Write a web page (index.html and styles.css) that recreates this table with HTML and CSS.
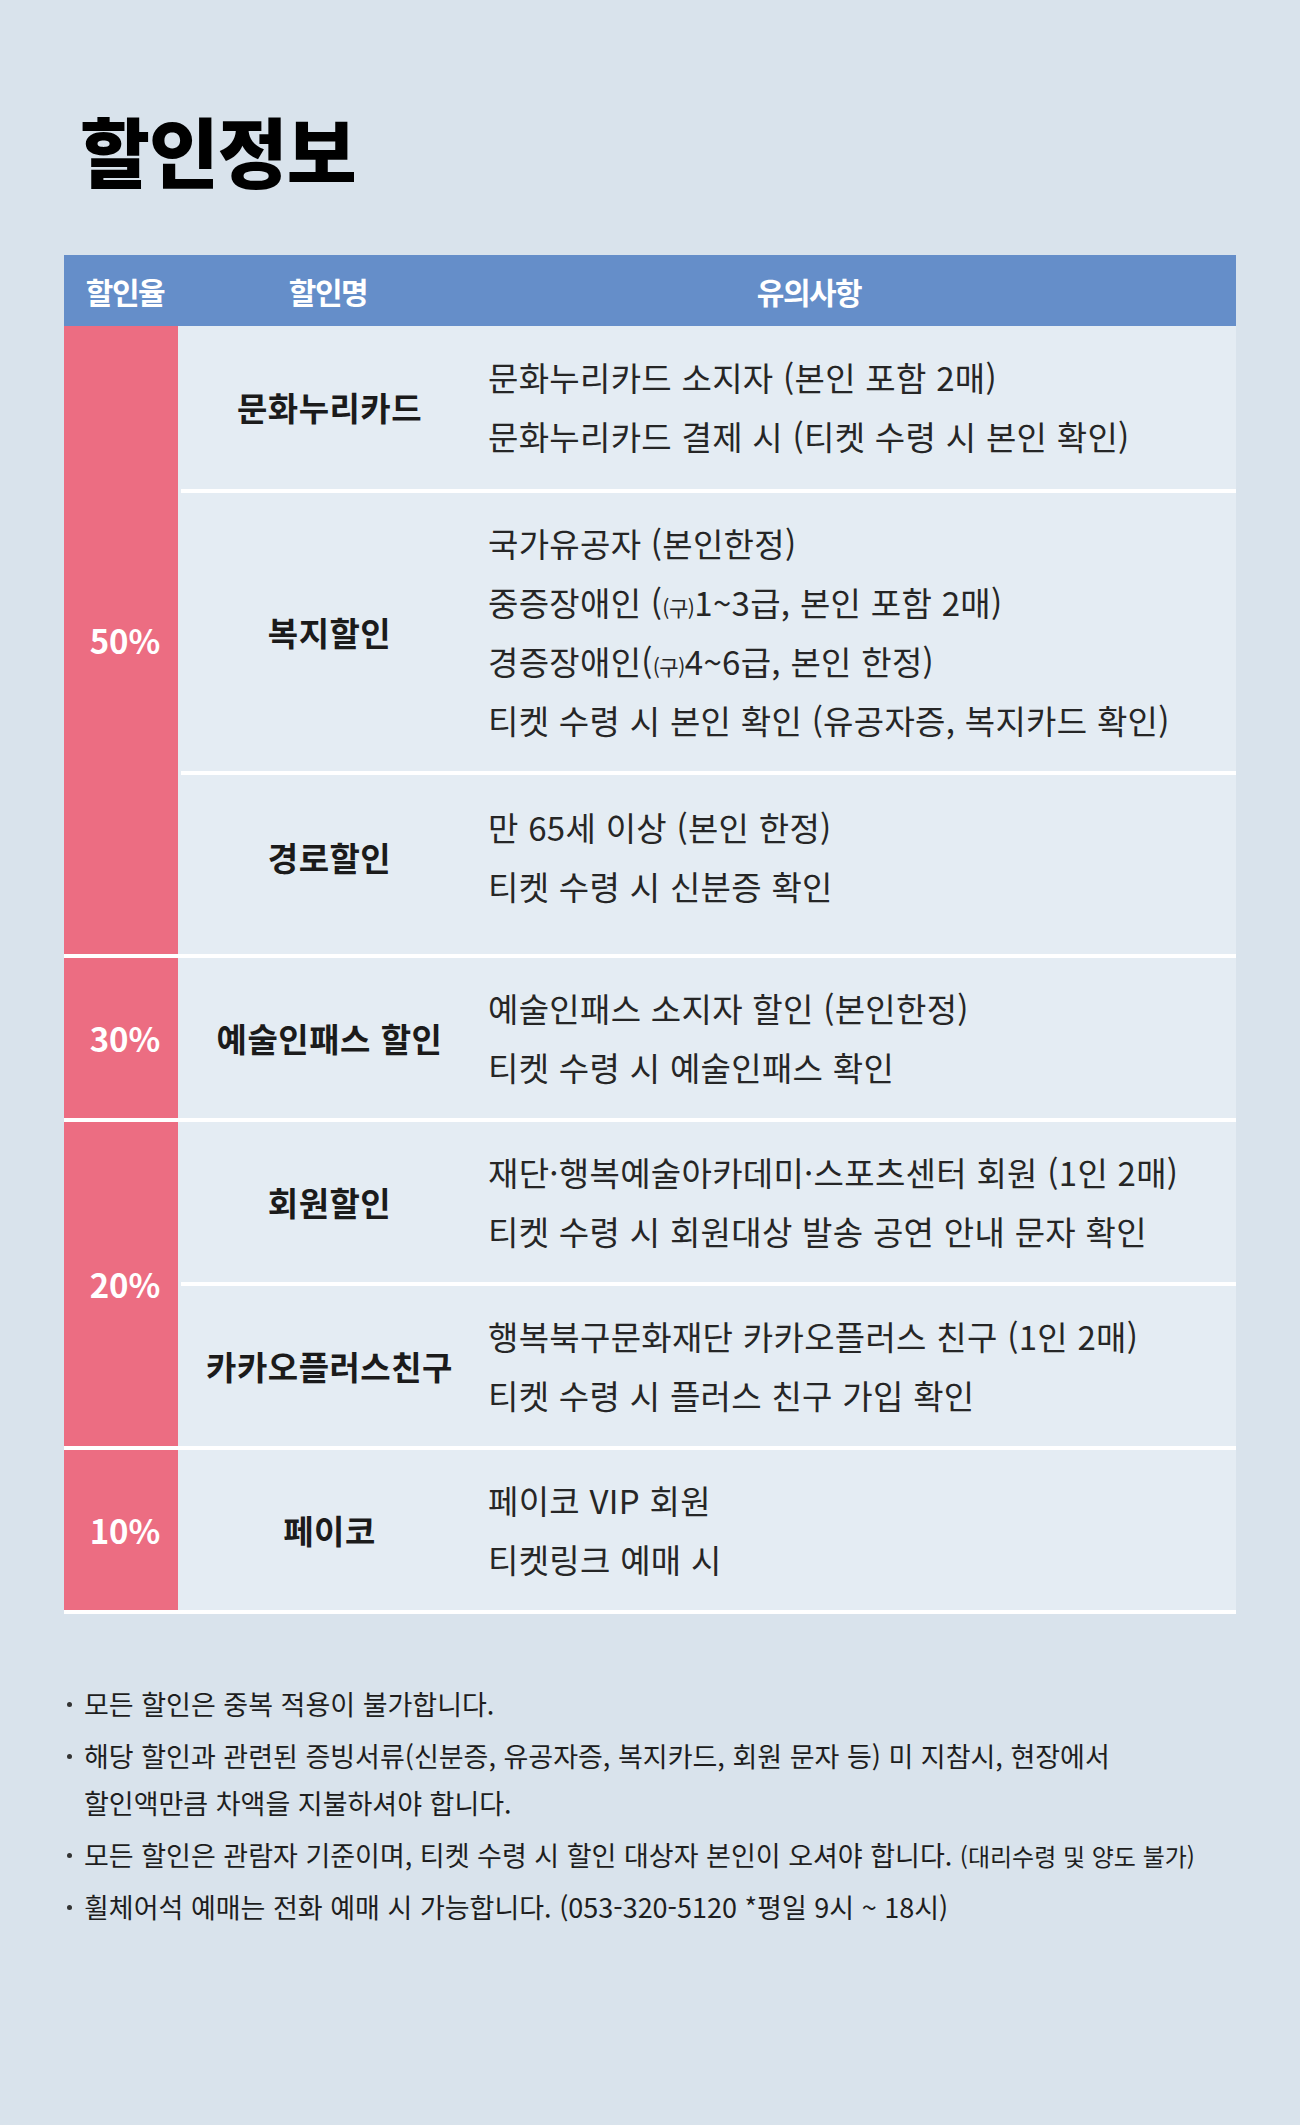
FILE: index.html
```html
<!DOCTYPE html>
<html lang="ko">
<head>
<meta charset="utf-8">
<title>할인정보</title>
<link rel="stylesheet" href="styles.css">
</head>
<body>
<main class="page">
  <h1 class="title">할인정보</h1>

  <section class="table">
    <div class="thead">
      <div class="th th--rate">할인율</div>
      <div class="th th--name">할인명</div>
      <div class="th th--note">유의사항</div>
    </div>

    <div class="group">
      <div class="rate">50%</div>
      <div class="items">
        <div class="item item--roomy">
          <div class="name">문화누리카드</div>
          <div class="notes">
            <p>문화누리카드 소지자 (본인 포함 2매)</p>
            <p>문화누리카드 결제 시 (티켓 수령 시 본인 확인)</p>
          </div>
        </div>
        <div class="item">
          <div class="name">복지할인</div>
          <div class="notes">
            <p>국가유공자 (본인한정)</p>
            <p>중증장애인 (<span class="small">(구)</span>1~3급, 본인 포함 2매)</p>
            <p>경증장애인(<span class="small">(구)</span>4~6급, 본인 한정)</p>
            <p>티켓 수령 시 본인 확인 (유공자증, 복지카드 확인)</p>
          </div>
        </div>
        <div class="item item--tall">
          <div class="name">경로할인</div>
          <div class="notes">
            <p>만 65세 이상 (본인 한정)</p>
            <p>티켓 수령 시 신분증 확인</p>
          </div>
        </div>
      </div>
    </div>

    <div class="group">
      <div class="rate">30%</div>
      <div class="items">
        <div class="item">
          <div class="name">예술인패스 할인</div>
          <div class="notes">
            <p>예술인패스 소지자 할인 (본인한정)</p>
            <p>티켓 수령 시 예술인패스 확인</p>
          </div>
        </div>
      </div>
    </div>

    <div class="group">
      <div class="rate">20%</div>
      <div class="items">
        <div class="item">
          <div class="name">회원할인</div>
          <div class="notes">
            <p>재단·행복예술아카데미·스포츠센터 회원 (1인 2매)</p>
            <p>티켓 수령 시 회원대상 발송 공연 안내 문자 확인</p>
          </div>
        </div>
        <div class="item">
          <div class="name">카카오플러스친구</div>
          <div class="notes">
            <p>행복북구문화재단 카카오플러스 친구 (1인 2매)</p>
            <p>티켓 수령 시 플러스 친구 가입 확인</p>
          </div>
        </div>
      </div>
    </div>

    <div class="group">
      <div class="rate">10%</div>
      <div class="items">
        <div class="item">
          <div class="name">페이코</div>
          <div class="notes">
            <p>페이코 VIP 회원</p>
            <p>티켓링크 예매 시</p>
          </div>
        </div>
      </div>
    </div>
  </section>

  <ul class="guide">
    <li><span class="dot"></span><span class="guide-text">모든 할인은 중복 적용이 불가합니다.</span></li>
    <li><span class="dot"></span><span class="guide-text">해당 할인과 관련된 증빙서류(신분증, 유공자증, 복지카드, 회원 문자 등) 미 지참시, 현장에서<br>할인액만큼 차액을 지불하셔야 합니다.</span></li>
    <li><span class="dot"></span><span class="guide-text">모든 할인은 관람자 기준이며, 티켓 수령 시 할인 대상자 본인이 오셔야 합니다. <span class="guide-small">(대리수령 및 양도 불가)</span></span></li>
    <li><span class="dot"></span><span class="guide-text">휠체어석 예매는 전화 예매 시 가능합니다. (053-320-5120 *평일 9시 ~ 18시)</span></li>
  </ul>
</main>
</body>
</html>
```

FILE: styles.css
```css
html, body {
  margin: 0;
  padding: 0;
  background: #d9e3ec;
}

body {
  font-family: "Noto Sans CJK KR", "Noto Sans", sans-serif;
  color: #222;
}

.page {
  width: 1300px;
  min-height: 2125px;
  box-sizing: border-box;
  padding: 111px 64px 0 64px;
}

.title {
  margin: 0 0 68px 16px;
  font-size: 76px;
  line-height: 76px;
  font-weight: 900;
  letter-spacing: -1px;
  color: #000;
}

.table {
  width: 1172px;
}

.thead {
  display: grid;
  grid-template-columns: 114px 300px 1fr;
  height: 71px;
  align-items: center;
  background: #658ec9;
  color: #fff;
  font-weight: 700;
  font-size: 30px;
  letter-spacing: -1.5px;
}

.th {
  text-align: center;
  line-height: 1;
}

.th--rate {
  padding-left: 8px;
}

.th--note {
  padding-right: 96px;
}

.group {
  display: flex;
  border-bottom: 4px solid #fff;
}

.rate {
  width: 114px;
  flex: none;
  box-sizing: border-box;
  padding-left: 8px;
  display: flex;
  align-items: center;
  justify-content: center;
  background: #ec6d82;
  color: #fff;
  font-weight: 700;
  font-size: 33px;
  letter-spacing: 0;
}

.items {
  flex: 1;
  background: #e4ecf3;
  padding-left: 3px;
  display: flex;
  flex-direction: column;
}

.item {
  display: grid;
  grid-template-columns: 297px 1fr;
  align-items: center;
  padding: 21px 0;
  border-bottom: 4px solid #fff;
}

.item:last-child {
  border-bottom: none;
}

.item--roomy {
  padding: 22px 0 23px;
}

.item--tall {
  padding: 23px 0 38px;
}

.name {
  text-align: center;
  font-weight: 700;
  font-size: 33px;
  letter-spacing: 0.5px;
  color: #1b1b1b;
}

.notes {
  padding-left: 10px;
  font-size: 33px;
  line-height: 59px;
  letter-spacing: 0.3px;
  color: #262626;
}

.notes p {
  margin: 0;
  white-space: nowrap;
}

.small {
  font-size: 21px;
  line-height: 0;
  letter-spacing: -0.5px;
}

.guide {
  list-style: none;
  margin: 66px 0 0 0;
  padding: 0;
  font-size: 27px;
  line-height: 47px;
  letter-spacing: 0;
  color: #1e1e1e;
}

.guide li {
  display: flex;
  margin-bottom: 5px;
}

.dot {
  flex: none;
  width: 20px;
  height: 47px;
  position: relative;
}

.dot::before {
  content: "";
  position: absolute;
  left: 3px;
  top: 22px;
  width: 5px;
  height: 5px;
  border-radius: 50%;
  background: #333;
}

.guide-text {
  white-space: nowrap;
}

.guide-small {
  font-size: 24px;
  line-height: 0;
  letter-spacing: 0;
}
```
